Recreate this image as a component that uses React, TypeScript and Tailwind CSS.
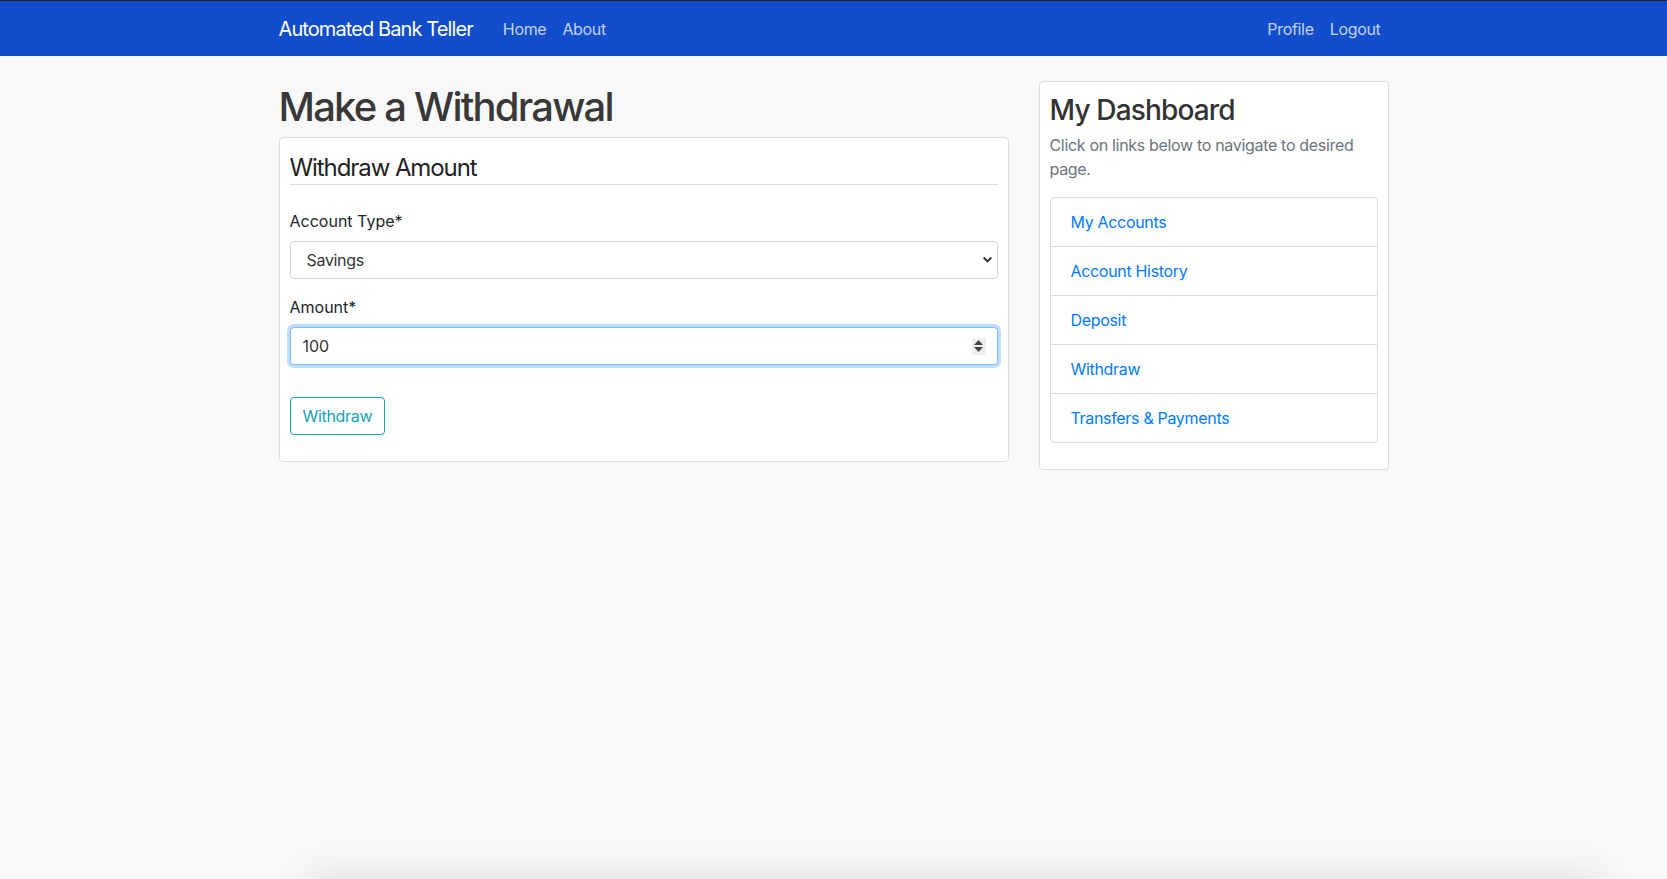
import { useState } from 'react';

const links = ['My Accounts', 'Account History', 'Deposit', 'Withdraw', 'Transfers & Payments'];

const Navbar = () => (
  <nav className="h-[56px] shrink-0 border-t border-[#222] bg-[#124ecb]">
    <div className="mx-auto flex h-full w-[1140px] items-center px-[15px]">
      <a className="mr-[22px] text-[20px] leading-[30px] tracking-[-0.045em] text-white">Automated Bank Teller</a>
      <ul className="flex tracking-[-0.02em]">
        <li className="px-2 text-white/75">Home</li>
        <li className="px-2 text-white/75">About</li>
      </ul>
      <ul className="ml-auto flex tracking-[-0.02em]">
        <li className="px-2 text-white/75">Profile</li>
        <li className="px-2 text-white/75">Logout</li>
      </ul>
    </div>
  </nav>
);

const WithdrawForm = () => {
  const [type, setType] = useState('Savings');
  const [amount, setAmount] = useState('100');

  return (
    <div className="rounded border border-[#dcdcdc] bg-white px-[10px] pt-[16px] pb-[10px]">
      {/* 제목 */}
      <h4 className="mb-6 border-b border-[#dcdcdc] pb-[1px] text-[24px] leading-[1.2] tracking-[-0.045em] text-[#222]">
        Withdraw Amount
      </h4>
      <div className="mb-4">
        <label className="mb-2 block text-[#212529]">Account Type*</label>
        <div className="relative">
          <select
            value={type}
            onChange={(e) => setType(e.target.value)}
            className="block h-[38px] w-full appearance-none rounded border border-[#ced4da] bg-white px-[16px] tracking-[-0.02em] text-[#333] outline-none"
          >
            <option>Savings</option>
            <option>Checking</option>
          </select>
          <svg className="pointer-events-none absolute top-[13px] right-[5px] h-[11px] w-[11px]" viewBox="0 0 10 10">
            <path d="M1.5 3.2 L5 6.7 L8.5 3.2" fill="none" stroke="#333" strokeWidth="1.8" />
          </svg>
        </div>
      </div>
      <div className="mb-4">
        <label className="mb-2 block text-[#212529]">Amount*</label>
        <div className="relative">
          <input
            value={amount}
            onChange={(e) => setAmount(e.target.value)}
            className="block h-[38px] w-full rounded border border-[#80bdff] bg-white px-3 text-[#333] shadow-[0_0_0_3px_rgba(0,123,255,0.25)] outline-none"
          />
          {/* 스피너 */}
          <div className="pointer-events-none absolute top-[11px] right-[12px] flex h-[17px] w-[14px] flex-col items-center justify-center gap-[2px] bg-[#eeeeee]">
            <svg className="h-[5px] w-[9px]" viewBox="0 0 9 5">
              <path d="M4.5 0 L9 5 L0 5 Z" fill="#444" />
            </svg>
            <svg className="h-[5px] w-[9px]" viewBox="0 0 9 5">
              <path d="M0 0 L9 0 L4.5 5 Z" fill="#444" />
            </svg>
          </div>
        </div>
      </div>
      <button className="mt-4 mb-4 h-[38px] rounded border border-[#17a2b8] px-3 tracking-[-0.02em] text-[#17a2b8]">
        Withdraw
      </button>
    </div>
  );
};

const Dashboard = () => (
  <div className="rounded border border-[#dcdcdc] bg-white px-[10px] pt-[12px] pb-[10px]">
    <h3 className="mb-[5px] text-[28px] leading-[1.2] font-medium tracking-[-0.03em] text-[#333]">My Dashboard</h3>
    <p className="mb-4 tracking-[-0.02em] text-[#6c757d]">Click on links below to navigate to desired page.</p>
    <ul className="mb-4 rounded border border-[#dcdcdc] tracking-[-0.02em]">
      {links.map((l, i) => (
        <li
          key={l}
          className={`px-5 py-[12px] text-[#007bff] ${i > 0 ? 'border-t border-[#dcdcdc]' : ''}`}
        >
          {l}
        </li>
      ))}
    </ul>
  </div>
);

export default function App() {
  return (
    <div className="flex h-[879px] flex-col overflow-hidden bg-[#f8f8f8] font-['Inter',sans-serif] text-[16px] leading-[1.5] text-[#212529]">
      <Navbar />
      <main className="h-[823px] shrink-0">
        <div className="mx-auto flex w-[1140px] pt-[25px]">
          <div className="w-[760px] px-[15px]">
            <h1 className="mt-[2px] mb-[6px] text-[40px] leading-[1.2] font-medium tracking-[-0.045em] text-[#383838]">
              Make a Withdrawal
            </h1>
            <WithdrawForm />
          </div>
          <div className="w-[380px] px-[15px]">
            <Dashboard />
          </div>
        </div>
      </main>
      {/* 하단 그림자 */}
      <footer className="ml-[310px] h-[60px] w-[1290px] shrink-0 bg-[#f2f2f2] shadow-[0_0_40px_rgba(0,0,0,0.12)]" />
    </div>
  );
}
